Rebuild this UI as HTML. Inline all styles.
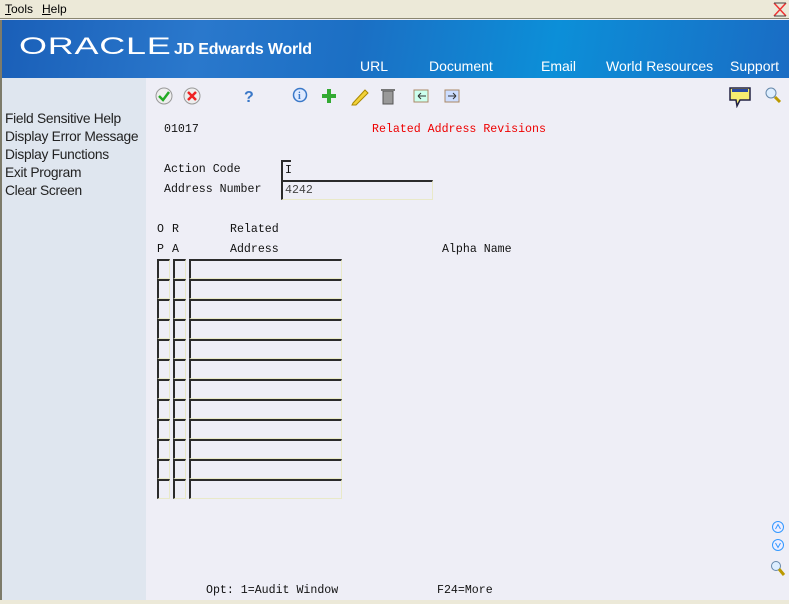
<!DOCTYPE html>
<html><head><meta charset="utf-8">
<style>
*{margin:0;padding:0;box-sizing:border-box}
body{width:789px;height:604px;overflow:hidden;background:#eeeef6;position:relative;font-family:"Liberation Sans",sans-serif}
.menu{position:absolute;left:0;top:0;width:789px;height:19px;background:#ece9d8;font-size:12px;border-bottom:1px solid #8a8670}
.menu span{position:absolute;top:2px}
.banner{position:absolute;left:0;top:20px;width:789px;height:58px;background:linear-gradient(100deg,#1a5fb8 0%,#2a78cc 25%,#1b6fc4 45%,#0c8fd8 70%,#1a6cc4 100%);border-left:2px solid #7d7b6a}
.oracle{position:absolute;left:17px;top:13px;color:#fff;font-size:24px;letter-spacing:0.5px;font-family:"Liberation Sans",sans-serif;transform:scaleX(1.5);transform-origin:left}
.jde{position:absolute;left:172px;top:21px;color:#fff;font-weight:bold;font-size:16px;letter-spacing:-0.2px}
.nav{position:absolute;top:38px;color:#fff;font-size:14px}
.left{position:absolute;left:0;top:78px;width:146px;height:522px;background:#dfe6ef;border-left:2px solid #7d7b6a}
.left div{font-size:13.8px;color:#222;height:18px;padding-left:3px;letter-spacing:-0.3px}
.mono{position:absolute;font-family:"Liberation Mono",monospace;font-size:11.6px;color:#111;white-space:pre}
.fld{position:absolute;height:20px;border-top:2px solid #2b2b2b;border-left:2px solid #2b2b2b;border-right:1px solid #e9e9c8;border-bottom:1px solid #e9e9c8}
.bottom{position:absolute;left:0;top:600px;width:789px;height:4px;background:#ece9d8}
</style></head><body>
<div class="menu"><span style="left:5px"><u>T</u>ools</span><span style="left:42px"><u>H</u>elp</span>
<svg style="position:absolute;left:772px;top:1px" width="16" height="17"><path d="M2 2 L14 15 M14 2 L2 15" stroke="#e33" stroke-width="1.5"/><path d="M2 2 L14 2 M2 15 L14 15" stroke="#444" stroke-width="1"/></svg></div>
<div class="banner">
<div class="oracle">ORACLE</div>
<div class="jde">JD Edwards World</div>
<div class="nav" style="left:358px">URL</div>
<div class="nav" style="left:427px">Document</div>
<div class="nav" style="left:539px">Email</div>
<div class="nav" style="left:604px">World Resources</div>
<div class="nav" style="left:728px">Support</div>
</div>
<div class="left"><div style="height:33px"></div>
<div>Field Sensitive Help</div><div>Display Error Message</div><div>Display Functions</div><div>Exit Program</div><div>Clear Screen</div></div>

<svg style="position:absolute;left:154px;top:86px" width="640" height="22">
<circle cx="10" cy="10" r="8" fill="#eee" stroke="#999"/><path d="M5 10 L9 14 L15 6" stroke="#2a2" stroke-width="2.5" fill="none"/>
<circle cx="38" cy="10" r="8" fill="#eee" stroke="#999"/><path d="M34 6 L42 14 M42 6 L34 14" stroke="#e22" stroke-width="2.5"/>
<text x="90" y="16" font-family="Liberation Sans" font-weight="bold" font-size="16" fill="#3a78c8">?</text>
<circle cx="146" cy="9" r="6.5" fill="#dfeaff" stroke="#3a78c8" stroke-width="1.5"/><text x="144" y="13" font-size="10" font-weight="bold" fill="#3a78c8" font-family="Liberation Serif">i</text>
<path d="M175 3 V17 M168 10 H182" stroke="#3a3" stroke-width="4"/>
<path d="M199 17 L211 4 L214 7 L202 19 L198 19 Z" fill="#f2d23a" stroke="#a80"/>
<rect x="229" y="5" width="10" height="13" fill="#999" stroke="#555"/><rect x="227" y="3" width="14" height="2" fill="#777"/>
<rect x="260" y="4" width="14" height="12" fill="#cfe" stroke="#a86"/><path d="M264 10 H272 M264 10 L267 7 M264 10 L267 13" stroke="#333"/>
<rect x="291" y="4" width="14" height="12" fill="#cdf" stroke="#a86"/><path d="M294 10 H302 M302 10 L299 7 M302 10 L299 13" stroke="#333"/>
<path d="M576 2 H596 V14 H586 L583 20 L582 14 H576 Z" fill="#f8ee70" stroke="#224" stroke-width="1.5"/><rect x="578" y="3" width="16" height="3" fill="#2a4aa0"/>
<circle cx="617" cy="7" r="5" fill="#def" stroke="#68a"/><path d="M621 11 L626 16" stroke="#b90" stroke-width="3"/>
</svg>

<div class="mono" style="left:164px;top:123px">01017</div>
<div class="mono" style="left:372px;top:123px;color:#e00">Related Address Revisions</div>
<div class="mono" style="left:164px;top:163px">Action Code</div>
<div class="mono" style="left:164px;top:183px">Address Number</div>
<div style="position:absolute;left:281px;top:160px;width:10px;height:20px;border-top:2px solid #2b2b2b;border-left:2px solid #2b2b2b"></div>
<div class="mono" style="left:285px;top:164px">I</div>
<div style="position:absolute;left:281px;top:180px;width:152px;height:20px;border-top:2px solid #2b2b2b;border-left:2px solid #2b2b2b;border-right:1px solid #e9e9c8;border-bottom:1px solid #e9e9c8"></div>
<div class="mono" style="left:285px;top:184px;color:#444">4242</div>
<div class="mono" style="left:157px;top:223px">O</div><div class="mono" style="left:172px;top:223px">R</div><div class="mono" style="left:230px;top:223px">Related</div>
<div class="mono" style="left:157px;top:243px">P</div><div class="mono" style="left:172px;top:243px">A</div><div class="mono" style="left:230px;top:243px">Address</div><div class="mono" style="left:442px;top:243px">Alpha Name</div>

<div class="fld" style="left:157px;top:259px;width:13px"></div><div class="fld" style="left:173px;top:259px;width:13px"></div><div class="fld" style="left:189px;top:259px;width:153px"></div>
<div class="fld" style="left:157px;top:279px;width:13px"></div><div class="fld" style="left:173px;top:279px;width:13px"></div><div class="fld" style="left:189px;top:279px;width:153px"></div>
<div class="fld" style="left:157px;top:299px;width:13px"></div><div class="fld" style="left:173px;top:299px;width:13px"></div><div class="fld" style="left:189px;top:299px;width:153px"></div>
<div class="fld" style="left:157px;top:319px;width:13px"></div><div class="fld" style="left:173px;top:319px;width:13px"></div><div class="fld" style="left:189px;top:319px;width:153px"></div>
<div class="fld" style="left:157px;top:339px;width:13px"></div><div class="fld" style="left:173px;top:339px;width:13px"></div><div class="fld" style="left:189px;top:339px;width:153px"></div>
<div class="fld" style="left:157px;top:359px;width:13px"></div><div class="fld" style="left:173px;top:359px;width:13px"></div><div class="fld" style="left:189px;top:359px;width:153px"></div>
<div class="fld" style="left:157px;top:379px;width:13px"></div><div class="fld" style="left:173px;top:379px;width:13px"></div><div class="fld" style="left:189px;top:379px;width:153px"></div>
<div class="fld" style="left:157px;top:399px;width:13px"></div><div class="fld" style="left:173px;top:399px;width:13px"></div><div class="fld" style="left:189px;top:399px;width:153px"></div>
<div class="fld" style="left:157px;top:419px;width:13px"></div><div class="fld" style="left:173px;top:419px;width:13px"></div><div class="fld" style="left:189px;top:419px;width:153px"></div>
<div class="fld" style="left:157px;top:439px;width:13px"></div><div class="fld" style="left:173px;top:439px;width:13px"></div><div class="fld" style="left:189px;top:439px;width:153px"></div>
<div class="fld" style="left:157px;top:459px;width:13px"></div><div class="fld" style="left:173px;top:459px;width:13px"></div><div class="fld" style="left:189px;top:459px;width:153px"></div>
<div class="fld" style="left:157px;top:479px;width:13px"></div><div class="fld" style="left:173px;top:479px;width:13px"></div><div class="fld" style="left:189px;top:479px;width:153px"></div>

<svg style="position:absolute;left:768px;top:518px" width="20" height="60">
<circle cx="10" cy="9" r="5.5" fill="#eef" stroke="#39f"/><path d="M7.5 11 L10 6.5 L12.5 11" stroke="#39f" fill="none"/>
<circle cx="10" cy="27" r="5.5" fill="#eef" stroke="#39f"/><path d="M7.5 25 L10 29.5 L12.5 25" stroke="#39f" fill="none"/>
<circle cx="8" cy="48" r="4.5" fill="#def" stroke="#68a"/><path d="M11 51 L16 57" stroke="#b90" stroke-width="3"/>
</svg>
<div class="mono" style="left:206px;top:584px">Opt: 1=Audit Window</div>
<div class="mono" style="left:437px;top:584px">F24=More</div>
<div class="bottom"></div>
</body></html>
